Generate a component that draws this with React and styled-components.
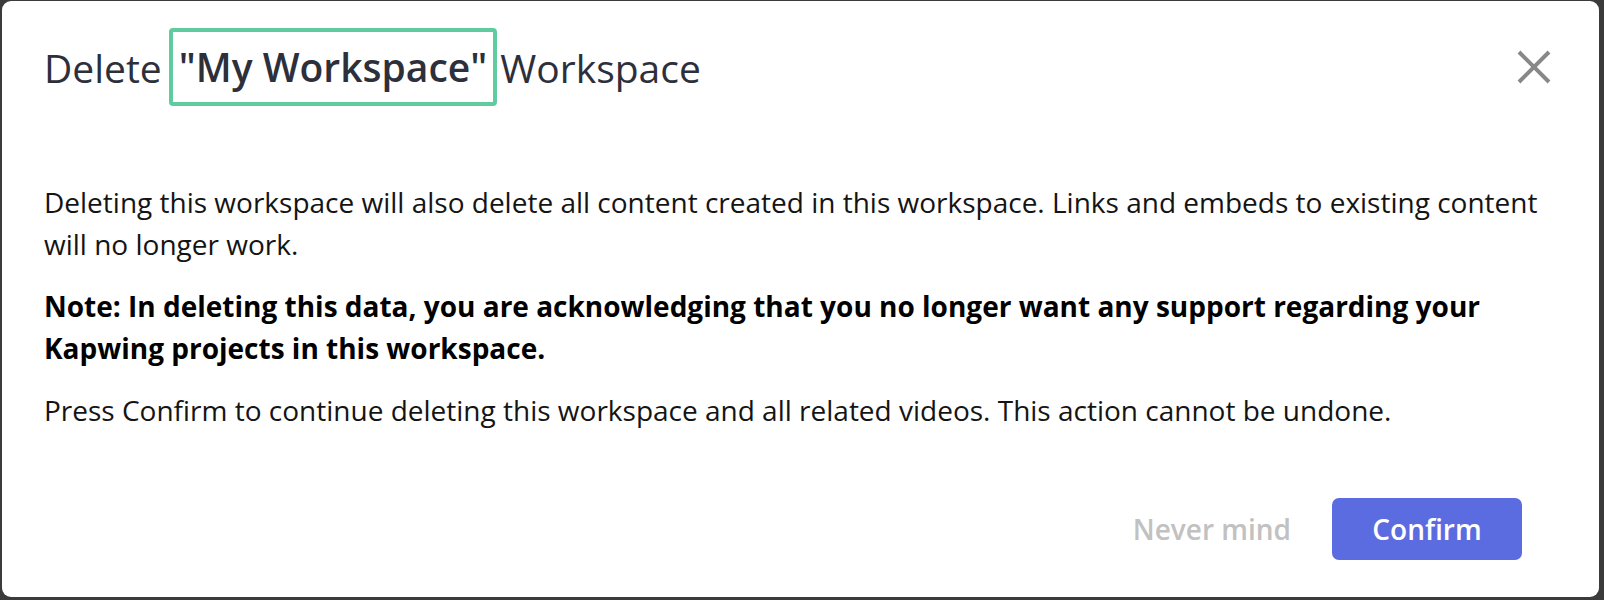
import React from 'react';
import styled, { createGlobalStyle } from 'styled-components';

const GlobalStyle = createGlobalStyle`
  html, body {
    margin: 0;
    padding: 0;
    background-color: #3b3b3b;
  }
  #root {
    height: 100vh;
    display: flex;
  }
`;

const Modal = styled.div`
  flex: 1;
  display: flex;
  flex-direction: column;
  margin: 1px 5px 3px 2px;
  background-color: #fff;
  border-radius: 9px;
  font-family: 'Open Sans', 'Noto Sans', sans-serif;
`;

const Header = styled.div`
  display: flex;
  align-items: center;
  justify-content: space-between;
  padding: 27px 47px 0 42px;
`;

const Title = styled.h2`
  margin: 0;
  font-size: 39px;
  font-weight: 400;
  color: #2d303b;
  display: flex;
  align-items: center;
`;

const Highlight = styled.span`
  display: inline-block;
  margin: 0 3px 0 7px;
  padding: 8px 6px;
  border: 4px solid #5fcc9f;
  border-radius: 4px;
  font-weight: 600;
  line-height: 54px;
`;

const CloseButton = styled.button`
  display: flex;
  padding: 0;
  border: none;
  background: none;
  cursor: pointer;
`;

const Body = styled.div`
  padding: 75px 40px 0 42px;
  color: #141414;
  font-size: 28px;
  line-height: 42px;
`;

const Paragraph = styled.p`
  margin: 0 0 20px;
  font-weight: ${({ bold }) => (bold ? 700 : 400)};
  color: ${({ bold }) => (bold ? '#000' : 'inherit')};
`;

const Footer = styled.div`
  margin-top: auto;
  display: flex;
  justify-content: flex-end;
  align-items: center;
  gap: 41px;
  padding: 0 77px 37px 0;
`;

const TextButton = styled.button`
  border: none;
  background: none;
  padding: 0;
  font-family: inherit;
  font-size: 28px;
  font-weight: 600;
  color: #c1c1c1;
  cursor: pointer;
`;

const PrimaryButton = styled.button`
  width: 190px;
  height: 62px;
  border: none;
  border-radius: 7px;
  background-color: #5b6ce1;
  color: #fff;
  font-family: inherit;
  font-size: 28px;
  font-weight: 600;
  cursor: pointer;
`;

const CloseIcon = () => (
  <svg width="36" height="36" viewBox="0 0 36 36">
    <path d="M3 3 L33 33 M33 3 L3 33" stroke="#888" strokeWidth="4" fill="none" />
  </svg>
);

export default function App() {
  return (
    <>
      <GlobalStyle />
      <Modal>
        <Header>
          <Title>
            Delete<Highlight>"My Workspace"</Highlight>Workspace
          </Title>
          <CloseButton aria-label="Close">
            <CloseIcon />
          </CloseButton>
        </Header>
        <Body>
          <Paragraph>
            Deleting this workspace will also delete all content created in this workspace. Links and embeds to existing content will no longer work.
          </Paragraph>
          <Paragraph bold>
            Note: In deleting this data, you are acknowledging that you no longer want any support regarding your Kapwing projects in this workspace.
          </Paragraph>
          <Paragraph>
            Press Confirm to continue deleting this workspace and all related videos. This action cannot be undone.
          </Paragraph>
        </Body>
        <Footer>
          <TextButton>Never mind</TextButton>
          <PrimaryButton>Confirm</PrimaryButton>
        </Footer>
      </Modal>
    </>
  );
}
